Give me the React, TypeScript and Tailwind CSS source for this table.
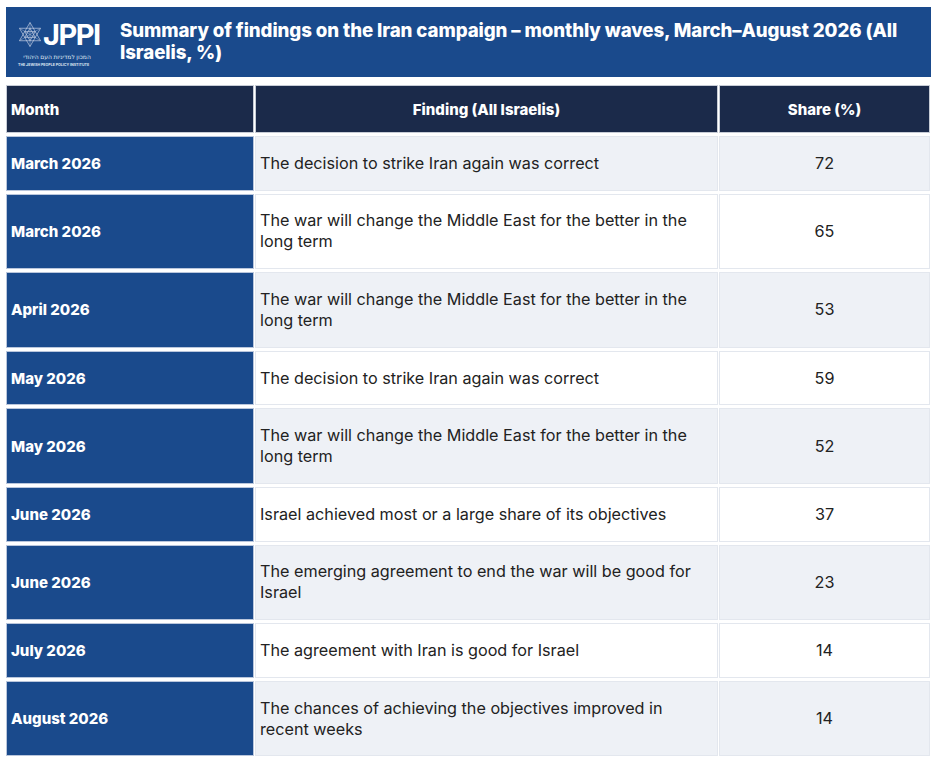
import React from 'react';

interface FindingRow {
  month: string;
  finding: string;
  share: number;
}

const rows: FindingRow[] = [
  { month: 'March 2026', finding: 'The decision to strike Iran again was correct', share: 72 },
  { month: 'March 2026', finding: 'The war will change the Middle East for the better in the long term', share: 65 },
  { month: 'April 2026', finding: 'The war will change the Middle East for the better in the long term', share: 53 },
  { month: 'May 2026', finding: 'The decision to strike Iran again was correct', share: 59 },
  { month: 'May 2026', finding: 'The war will change the Middle East for the better in the long term', share: 52 },
  { month: 'June 2026', finding: 'Israel achieved most or a large share of its objectives', share: 37 },
  { month: 'June 2026', finding: 'The emerging agreement to end the war will be good for Israel', share: 23 },
  { month: 'July 2026', finding: 'The agreement with Iran is good for Israel', share: 14 },
  { month: 'August 2026', finding: 'The chances of achieving the objectives improved in recent weeks', share: 14 },
];

function JppiLogo() {
  return (
    <div className="flex flex-col items-stretch w-[78px] shrink-0">
      <div className="flex items-end">
        <svg width="24" height="27" viewBox="0 0 25 27" className="mb-[5px] shrink-0" fill="none" stroke="#c9d3e6" strokeWidth="0.7">
          <path d="M12.5 1 L23.5 20 L1.5 20 Z" />
          <path d="M12.5 26 L1.5 7 L23.5 7 Z" />
          <path d="M12.5 7 L18 16.5 L7 16.5 Z" />
          <path d="M12.5 20 L7 10.5 L18 10.5 Z" />
          <path d="M1.5 7 L23.5 20 M23.5 7 L1.5 20 M12.5 1 L12.5 26" strokeWidth="0.4" />
        </svg>
        <span className="text-[29px] leading-[36px] font-bold text-white tracking-[-1.5px] ml-[1px] whitespace-nowrap" style={{ fontFamily: 'Inter, sans-serif' }}>
          JPPI
        </span>
      </div>
      <span
        dir="rtl"
        className="block text-[6px] leading-[9px] text-[#dfe6f2] whitespace-nowrap text-center"
        style={{ fontFamily: '"Noto Sans", "DejaVu Sans", sans-serif' }}
      >
        המכון למדיניות העם היהודי
      </span>
      <span className="block text-[3.6px] leading-[6px] text-[#dfe6f2] font-bold whitespace-nowrap" style={{ fontFamily: 'Inter, sans-serif' }}>
        THE JEWISH PEOPLE POLICY INSTITUTE
      </span>
    </div>
  );
}

export default function App() {
  return (
    <div className="bg-white w-[938px] min-h-[762px] pt-[7px] pl-[6px]" style={{ fontFamily: 'Inter, "Noto Sans", sans-serif' }}>
      <div className="w-[925px] h-[70px] bg-[#1a4a8c] flex items-center pl-[12px] pr-4">
        <JppiLogo />
        <h1 className="ml-[24px] text-white font-extrabold text-[18.7px] leading-[22px] tracking-[-0.1px]">
          Summary of findings on the Iran campaign – monthly waves, March–August 2026 (All Israelis, %)
        </h1>
      </div>

      <table className="mt-[5px] w-[926px] -ml-[1px] border-separate border-spacing-x-[1px] border-spacing-y-[3px] text-[16.2px]">
        <thead>
          <tr>
            <th className="w-[248px] bg-[#1b2a4a] border border-[#c7ccd6] text-left text-white font-extrabold text-[15px] leading-[21px] py-[12.5px] px-[4px]">
              Month
            </th>
            <th className="w-[463px] bg-[#1b2a4a] border border-[#c7ccd6] text-center text-white font-extrabold text-[15px] leading-[21px] py-[12.5px] px-[4px]">
              Finding (All Israelis)
            </th>
            <th className="bg-[#1b2a4a] border border-[#c7ccd6] text-center text-white font-extrabold text-[15px] leading-[21px] py-[12.5px] px-[4px]">
              Share (%)
            </th>
          </tr>
        </thead>
        <tbody>
          {rows.map((row, i) => {
            const shaded = i % 2 === 0;
            return (
              <tr key={i}>
                <td className="bg-[#1a4a8c] border border-[#b9c6dc] text-white font-extrabold text-[15px] leading-[21px] py-[15.8px] px-[4px]">
                  {row.month}
                </td>
                <td
                  className={`${shaded ? 'bg-[#eef1f6]' : 'bg-white'} border border-[#e3e7ee] text-[#222222] leading-[21px] py-[15.8px] pl-[4px] pr-[20px]`}
                >
                  {row.finding}
                </td>
                <td
                  className={`${shaded ? 'bg-[#eef1f6]' : 'bg-white'} border border-[#e3e7ee] text-[#222222] text-center leading-[21px] py-[15.8px] px-[4px]`}
                >
                  {row.share}
                </td>
              </tr>
            );
          })}
        </tbody>
      </table>
    </div>
  );
}
